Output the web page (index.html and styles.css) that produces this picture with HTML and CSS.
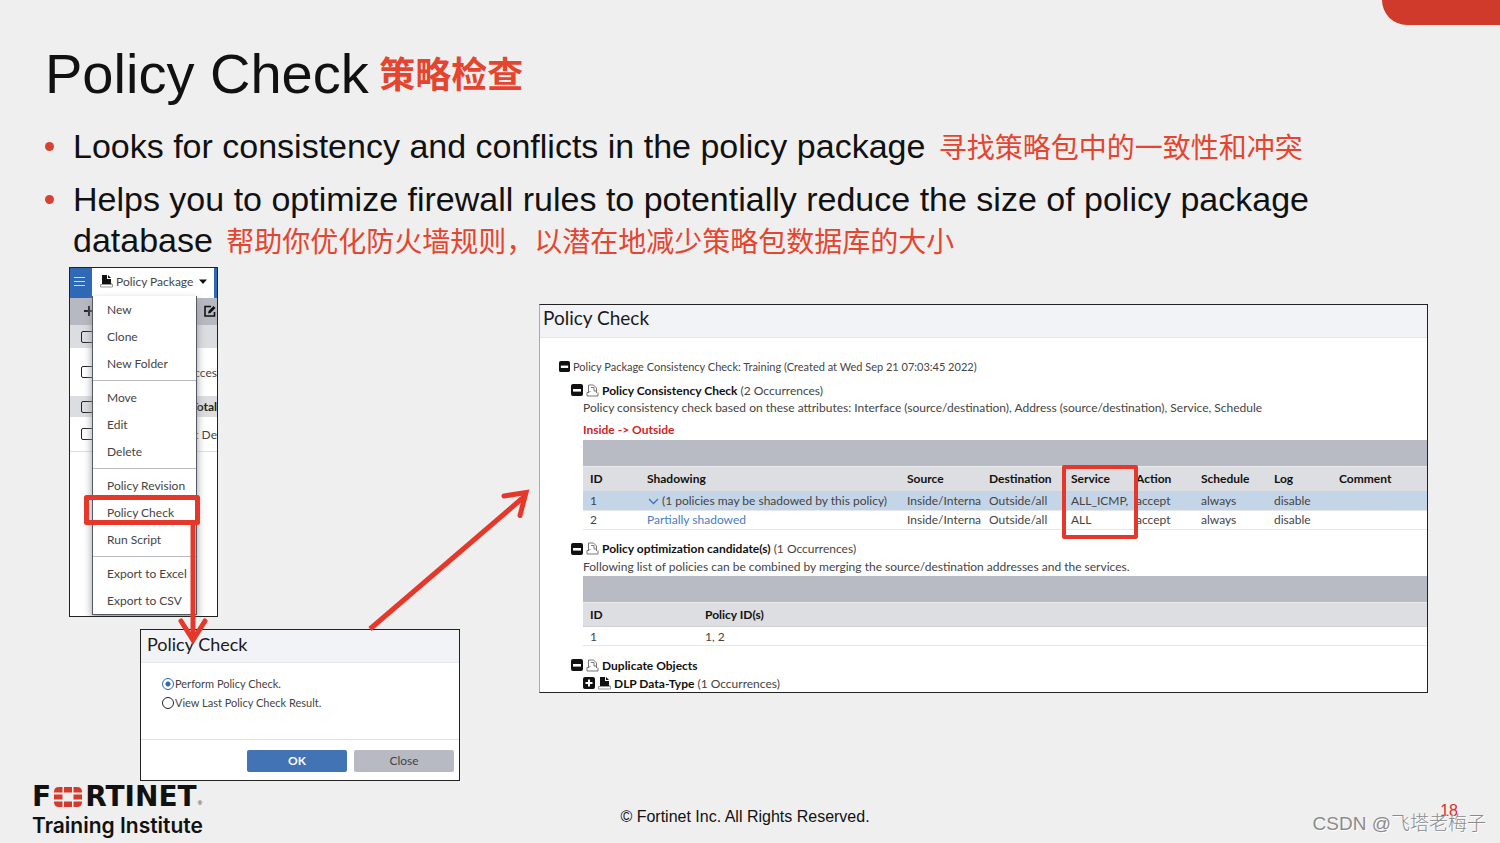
FILE: index.html
```html
<!DOCTYPE html>
<html lang="en">
<head>
<meta charset="utf-8">
<title>Policy Check</title>
<link rel="stylesheet" href="styles.css">
</head>
<body>
<svg class="defs" aria-hidden="true">
  <symbol id="minus" viewBox="0 0 12 12"><rect width="12" height="12" rx="2" fill="#111"/><rect x="2" y="5" width="8" height="2.600" fill="#fff"/></symbol>
  <symbol id="plus" viewBox="0 0 12 12"><rect width="12" height="12" rx="2" fill="#111"/><path d="M6 2.500v7M2.500 6h7" stroke="#fff" stroke-width="2"/></symbol>
  <symbol id="doc" viewBox="0 0 13 13"><path d="M2.500 8V1h5l3 3v5M5 3.500h3V7h3M1 8.500h2l1.500-1.500M1 8.500V12h11V8.500" fill="none" stroke="#777"/></symbol>
  <symbol id="doc-solid" viewBox="0 0 13 13"><path d="M2 0h5v4h4v5H2z" fill="#111"/><path d="M8 0l3 3H8z" fill="#111"/><path d="M.5 9.500h12V12H.5zM11 7.500l1.500 2" fill="none" stroke="#999"/></symbol>
</svg>
<main class="slide">
  <div class="corner"></div>
  <h1 class="title">Policy Check <span class="zh zh-title" lang="zh">策略检查</span></h1>
  <ul class="points">
    <li>Looks for consistency and conflicts in the policy package <span class="zh" lang="zh">寻找策略包中的一致性和冲突</span></li>
    <li>Helps you to optimize firewall rules to potentially reduce the size of policy package database <span class="zh" lang="zh">帮助你优化防火墙规则，以潜在地减少策略包数据库的大小</span></li>
  </ul>

  <div class="figures">
    <div class="steps">
      <section class="package">
        <div class="topbar">
          <button class="burger" aria-label="Menu"><svg width="11" height="10"><path d="M0 1.500h11M0 5.500h11M0 9.500h11" stroke="#cfe0f5" stroke-width="1"/></svg></button>
          <button class="tab"><svg width="13" height="13"><use href="#doc-solid"/></svg>Policy Package<svg class="caret" width="8" height="5"><path d="M0 .5h8L4 5z" fill="#111"/></svg></button>
        </div>
        <div class="tools">
          <svg width="10" height="12"><path d="M5 1v10M0 6h10" stroke="#222" stroke-width="2"/></svg>
          <svg width="12" height="12"><path d="M7 1.500H1v9.500h9.500V7" fill="none" stroke="#111" stroke-width="1.600"/><path d="M4 8.500l.6-2.600L9.500 1l2 2-5 5z" fill="#111"/></svg>
        </div>
        <div class="line head"><input type="checkbox" aria-label="Select all"></div>
        <div class="line tall"><input type="checkbox" aria-label="Select row"><span>cces</span></div>
        <div class="line total"><input type="checkbox" aria-label="Select total"><span>Total</span></div>
        <div class="line deny"><input type="checkbox" aria-label="Select row"><span>t De</span></div>
        <div class="menu">
          <button>New</button><button>Clone</button><button>New Folder</button>
          <hr>
          <button>Move</button><button>Edit</button><button>Delete</button>
          <hr>
          <button>Policy Revision</button><button>Policy Check</button><button>Run Script</button>
          <hr>
          <button>Export to Excel</button><button>Export to CSV</button>
        </div>
      </section>

      <form class="dialog">
        <h2 class="bar">Policy Check</h2>
        <div class="choices">
          <label><input type="radio" name="check" checked>Perform Policy Check.</label>
          <label><input type="radio" name="check">View Last Policy Check Result.</label>
        </div>
        <div class="actions"><button type="button" class="ok">OK</button><button type="button" class="close">Close</button></div>
      </form>

      <svg class="marks" width="470" height="520" aria-hidden="true">
        <g fill="none" stroke="#e5382a" stroke-width="5">
          <rect x="16.500" y="230.500" width="111" height="25" stroke-linejoin="round"/>
          <path d="M123 257V372"/>
          <path d="M111 354l12 19 12-19" stroke-linecap="round"/>
          <path d="M300 362L455 229"/>
          <path d="M434 229l22-3.500-6 23" stroke-linecap="round"/>
        </g>
      </svg>
    </div>

    <section class="report">
      <h2 class="bar">Policy Check</h2>
      <div class="tree">
        <p class="root"><svg class="ic" width="11" height="11"><use href="#minus"/></svg>Policy Package Consistency Check: Training (Created at Wed Sep 21 07:03:45 2022)</p>
        <div class="node">
          <h3><svg class="ic" width="12" height="12"><use href="#minus"/></svg><svg class="ic" width="13" height="13"><use href="#doc"/></svg><b>Policy Consistency Check</b>&nbsp;(2 Occurrences)</h3>
          <div class="inner">
            <p class="desc">Policy consistency check based on these attributes: Interface (source/destination), Address (source/destination), Service, Schedule</p>
            <p class="route">Inside -&gt; Outside</p>
            <div class="band"></div>
            <table>
              <colgroup><col class="w-id"><col class="w-shadow"><col class="w-addr"><col class="w-addr"><col class="w-short"><col class="w-short"><col class="w-sched"><col class="w-short"><col></colgroup>
              <thead><tr><th>ID</th><th>Shadowing</th><th>Source</th><th>Destination</th><th class="marked">Service<span class="frame"></span></th><th>Action</th><th>Schedule</th><th>Log</th><th>Comment</th></tr></thead>
              <tbody>
                <tr class="selected"><td>1</td><td><svg class="chev" width="11" height="7"><path d="M1 1l4.500 4.500L10 1" fill="none" stroke="#3d74bd" stroke-width="1.300"/></svg>(1 policies may be shadowed by this policy)</td><td>Inside/Interna</td><td>Outside/all</td><td>ALL_ICMP,</td><td>accept</td><td>always</td><td>disable</td><td></td></tr>
                <tr><td>2</td><td><a href="#shadowed">Partially shadowed</a></td><td>Inside/Interna</td><td>Outside/all</td><td>ALL</td><td>accept</td><td>always</td><td>disable</td><td></td></tr>
              </tbody>
            </table>
          </div>
        </div>
        <div class="node">
          <h3><svg class="ic" width="12" height="12"><use href="#minus"/></svg><svg class="ic" width="13" height="13"><use href="#doc"/></svg><b>Policy optimization candidate(s)</b>&nbsp;(1 Occurrences)</h3>
          <div class="inner">
            <p class="desc">Following list of policies can be combined by merging the source/destination addresses and the services.</p>
            <div class="band"></div>
            <table>
              <colgroup><col class="w-policy"><col></colgroup>
              <thead><tr><th>ID</th><th>Policy ID(s)</th></tr></thead>
              <tbody><tr><td>1</td><td>1, 2</td></tr></tbody>
            </table>
          </div>
        </div>
        <div class="node">
          <h3><svg class="ic" width="12" height="12"><use href="#minus"/></svg><svg class="ic" width="13" height="13"><use href="#doc"/></svg><b>Duplicate Objects</b></h3>
          <div class="inner">
            <h3><svg class="ic" width="12" height="12"><use href="#plus"/></svg><svg class="ic" width="13" height="13"><use href="#doc-solid"/></svg><b>DLP Data-Type</b>&nbsp;(1 Occurrences)</h3>
          </div>
        </div>
      </div>
    </section>
  </div>

  <footer class="footer">
    <div class="brand">
      <div class="wordmark"><span>F</span><svg width="28" height="20" viewBox="0 0 28 20" role="img" aria-label="O"><g fill="#d43a2c"><path d="M0 5Q0 0 5 0H8.500V5.500H0z"/><rect x="10" width="8" height="5.500"/><path d="M19.500 0h3.500q5 0 5 5v.5h-8.500z"/><rect y="7.500" width="8.500" height="5"/><rect x="19.500" y="7.500" width="8.500" height="5"/><path d="M0 14.500h8.500V20H5q-5 0-5-5z"/><rect x="10" y="14.500" width="8" height="5.500"/><path d="M19.500 14.500h8.500v.5q0 5-5 5h-3.500z"/></g></svg><span>RTINET</span><small>®</small></div>
      <div class="institute">Training Institute</div>
    </div>
    <p class="copyright">© Fortinet Inc. All Rights Reserved.</p>
    <div class="page">18</div>
    <div class="watermark">CSDN @飞塔老梅子</div>
  </footer>
</main>
</body>
</html>
```

FILE: styles.css
```css
* { box-sizing: border-box; }
body { margin: 0; background: #efefef; color: #111; font-family: "Liberation Sans", "Noto Sans CJK SC", sans-serif; }
h1, h2, h3, p, ul { margin: 0; padding: 0; font-weight: 400; }
button { border: 0; padding: 0; background: none; font: inherit; color: inherit; }
input { margin: 0; }
.defs { position: absolute; width: 0; height: 0; }

.slide { position: relative; min-height: 100vh; padding-top: 42px; overflow: hidden; display: flex; flex-direction: column; }
.corner { position: absolute; top: 0; right: 0; width: 118px; height: 25px; background: #d03a2b; border-bottom-left-radius: 25px; }

.title { padding-left: 45px; font-size: 56px; line-height: 64px; }
.zh { margin-left: 4px; color: #e5452f; font-family: "Noto Sans CJK SC", sans-serif; font-size: 28px; line-height: 1; }
.title .zh-title { margin-left: -5px; font-size: 36px; font-weight: 700; vertical-align: 5px; }

.points { list-style: none; margin: 20px 150px 0 45px; font-size: 34px; line-height: 41px; display: grid; gap: 12px; }
.points li { position: relative; padding-left: 28px; }
.points li::before { content: ""; position: absolute; left: 0; top: 16px; width: 9px; height: 9px; border-radius: 50%; background: #d8402f; }

.figures { display: flex; align-items: flex-start; gap: 79px; padding: 6px 72px 0 69px; font-family: Lato, sans-serif; font-size: 12px; color: #444; }
.steps { position: relative; flex: none; width: 391px; }
.marks { position: absolute; left: 1px; top: 0; overflow: visible; pointer-events: none; }

.package { position: relative; width: 149px; height: 350px; border: 1px solid #222; background: #fff; overflow: hidden; }
.topbar { display: flex; height: 30px; background: #2f68b5; }
.burger { width: 22px; padding: 0 6px 4px 2px; }
.tab { display: flex; align-items: center; width: 122px; gap: 3px; padding: 0 0 4px 8px; background: #fff; white-space: nowrap; }
.caret { margin-left: 3px; }
.tools { display: flex; justify-content: space-between; align-items: center; height: 27px; padding: 0 1px 2px 14px; background: #b6b9c1; }
.line { display: flex; align-items: center; justify-content: space-between; padding: 0 0 0 11px; }
.line input { appearance: none; width: 13px; height: 12px; border: 1px solid #222; border-radius: 2px; }
.head { height: 23px; background: #dcdde1; }
.tall { height: 48px; }
.total { height: 21px; background: #dcdde1; font-weight: 700; color: #222; }
.deny { height: 35px; border-bottom: 1px solid #ddd; }
.menu { position: absolute; left: 22px; top: 28px; width: 105px; display: flex; flex-direction: column; background: #fff; border: solid #555a66; border-width: 0 1px 1px; box-shadow: 0 4px 8px #999; }
.menu button { height: 27px; padding-left: 14px; text-align: left; white-space: nowrap; }
.menu hr { width: 100%; height: 1px; margin: 3px 0; border: 0; background: #b9bbc1; }

.bar { height: 33px; padding: 0 0 6px 3px; background: #f2f3f6; border-bottom: 1px solid #e6e7ea; color: #1a1a1a; font-size: 19px; line-height: 26px; }

.dialog { width: 320px; margin: 12px 0 0 71px; border: 1px solid #222; background: #fff; }
.dialog .bar { padding-left: 6px; font-size: 18px; line-height: 28px; }
.choices { display: grid; height: 76px; padding: 11px 0 0 21px; align-content: start; font-size: 11px; }
.choices label { display: flex; align-items: center; gap: 1px; height: 19px; }
.choices input { appearance: none; width: 12px; height: 12px; border: 1px solid #222; border-radius: 50%; }
.choices input:checked { border-color: #2f68b5; background: radial-gradient(#2f68b5 0 2px, #fff 3px); }
.actions { display: flex; justify-content: flex-end; gap: 7px; padding: 10px 5px 8px; border-top: 1px solid #e3e3e5; }
.actions button { width: 100px; height: 22px; padding-bottom: 2px; border-radius: 2px; }
.ok { background: #4173b5; color: #fff; font-weight: 700; }
.close { background: #b8bac3; }

.report { flex: 1; min-width: 0; height: 389px; margin-top: 37px; overflow: hidden; background: #fff; border: 1px solid #222; border-left-color: #aaa; }
.tree { padding: 19px 0 0 19px; }
.root, .tree h3 { display: flex; align-items: center; height: 18px; font-size: 12px; white-space: nowrap; }
.tree .root { font-size: 11px; }
.ic { flex: none; margin-right: 3px; }
.node { padding-left: 12px; }
.node b { color: #111; }
.node + .node { margin-top: 10px; }
.root + .node { margin-top: 6px; }
.inner { padding-left: 12px; }
.desc { height: 18px; line-height: 17px; white-space: nowrap; }
.route { height: 23px; padding-top: 4px; line-height: 18px; color: #cc2525; font-weight: 700; }
.band { height: 27px; background: #b8bbc3; border-bottom: 1px solid #e9eaec; }
table { width: 100%; border-collapse: collapse; table-layout: fixed; }
th, td { padding: 0 0 0 7px; text-align: left; white-space: nowrap; }
th { height: 24px; background: #dddee2; border-bottom: 1px solid #cfd1d6; color: #111; }
td { height: 19px; border-bottom: 1px solid #e6e7ea; }
.selected td { background: #c5d5e8; }
a { color: #4a7dc0; text-decoration: none; }
.chev { margin: 0 3px 0 1px; }
.w-id { width: 57px; }
.w-shadow { width: 260px; }
.w-addr { width: 82px; }
.w-short { width: 65px; }
.w-sched { width: 73px; }
.w-policy { width: 115px; }
.marked { position: relative; }
.frame { position: absolute; left: -2px; top: -2px; width: 76px; height: 74px; border: 4px solid #e5382a; border-radius: 2px; }

.footer { position: relative; display: grid; grid-template-columns: 1fr auto 1fr; margin-top: 6px; padding: 0 42px 0 32px; }
.wordmark { display: flex; align-items: center; gap: 3px; height: 20px; font: 700 28px/20px "DejaVu Sans", sans-serif; }
.wordmark small { align-self: flex-end; margin-left: -2px; font: 6px/8px "Liberation Sans", sans-serif; }
.institute { margin-top: 6px; font: 600 21px/26px Inter, sans-serif; }
.copyright { padding-top: 21px; font-size: 16px; line-height: 18px; }
.page { padding-top: 14px; text-align: right; font-size: 16px; line-height: 20px; color: #d8302a; }
.watermark { position: absolute; right: 14px; top: 24px; color: #8b8b8b; font: 300 19px/26px "Liberation Sans", "Noto Sans CJK SC", sans-serif; text-shadow: 1px 1px #fff; }
```
